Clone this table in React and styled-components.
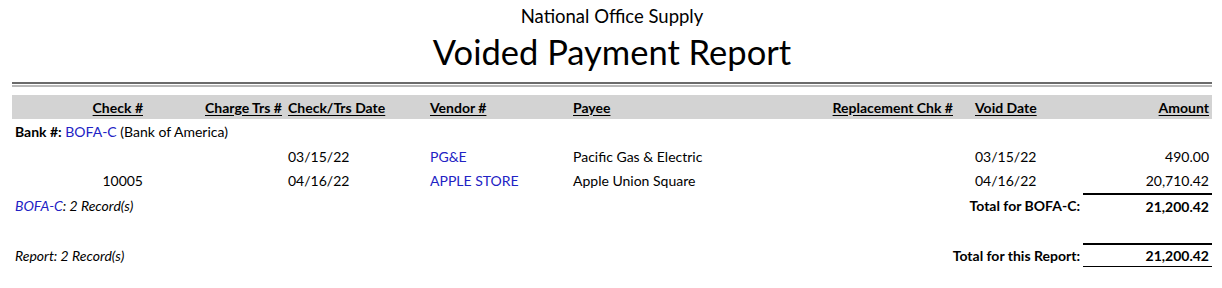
import React from "react";
import styled, { createGlobalStyle } from "styled-components";

const GlobalStyle = createGlobalStyle`
  html, body { margin: 0; padding: 0; background: #fff; }
  body { font-family: Lato, "Open Sans", sans-serif; color: #000; }
`;

const COLS = "134px 139px 142px 143px 230px 156px 127px 129px";

const Page = styled.div`
  width: 1200px;
  padding: 0 10px 0 12px;
`;

const Company = styled.div`
  text-align: center;
  font-size: 18.5px;
  line-height: 22px;
  padding-top: 5px;
`;

const Title = styled.h1`
  margin: 0;
  padding-top: 3px;
  text-align: center;
  font-weight: 400;
  font-size: 34.5px;
  line-height: 44px;
`;

const Rules = styled.div`
  margin-top: 8px;
  display: flex;
  flex-direction: column;
  gap: 1px;
`;

const RuleLine = styled.div`
  height: 2px;
  background: ${(p) => p.$color};
`;

const Row = styled.div`
  display: grid;
  grid-template-columns: ${COLS};
  align-items: center;
  height: ${(p) => p.$h || 24}px;
  font-size: 14px;
`;

const HeadRow = styled(Row)`
  margin-top: 8px;
  background: #d3d3d3;
  font-weight: 700;
`;

const Cell = styled.div`
  padding: 0 3px 0 ${(p) => (p.$indent ? p.$indent : 3)}px;
  text-align: ${(p) => (p.$right ? "right" : "left")};
  grid-column: ${(p) => p.$span || "auto"};
  white-space: nowrap;
  font-weight: ${(p) => (p.$bold ? 700 : "inherit")};
  font-style: ${(p) => (p.$italic ? "italic" : "normal")};
`;

const HeadText = styled.span`
  text-decoration: underline;
  text-underline-offset: 2px;
`;

const Link = styled.span`
  color: #2222c4;
`;

const AmountCell = styled(Cell)`
  align-self: stretch;
  display: flex;
  align-items: center;
  justify-content: flex-end;
  border-top: ${(p) => (p.$top ? "2px solid #000" : "none")};
  border-bottom: ${(p) => (p.$bottom ? "1px solid #000" : "none")};
`;

const Spacer = styled.div`
  height: ${(p) => p.$h}px;
`;

const headers = [
  { t: "Check #", right: true },
  { t: "Charge Trs #", right: true },
  { t: "Check/Trs Date" },
  { t: "Vendor #" },
  { t: "Payee" },
  { t: "Replacement Chk #", right: true },
  { t: "Void Date", indent: 19 },
  { t: "Amount", right: true },
];

const rows = [
  { chk: "", trs: "", date: "03/15/22", vendor: "PG&E", payee: "Pacific Gas & Electric", repl: "", voidDate: "03/15/22", amount: "490.00" },
  { chk: "10005", trs: "", date: "04/16/22", vendor: "APPLE STORE", payee: "Apple Union Square", repl: "", voidDate: "04/16/22", amount: "20,710.42" },
];

export default function App() {
  return (
    <Page>
      <GlobalStyle />
      <Company>National Office Supply</Company>
      <Title>Voided Payment Report</Title>
      <Rules>
        <RuleLine $color="#6b6b6b" />
        <RuleLine $color="#b8b8b8" />
      </Rules>
      <HeadRow>
        {headers.map((h) => (
          <Cell key={h.t} $right={h.right} $indent={h.indent}>
            <HeadText>{h.t}</HeadText>
          </Cell>
        ))}
      </HeadRow>
      <Row $h={25}>
        <Cell $span="1 / -1">
          <b>Bank #:</b> <Link>BOFA-C</Link> (Bank of America)
        </Cell>
      </Row>
      {rows.map((r, i) => (
        <Row key={i} $h={i === 0 ? 24 : 25}>
          <Cell $right>{r.chk}</Cell>
          <Cell $right>{r.trs}</Cell>
          <Cell>{r.date}</Cell>
          <Cell><Link>{r.vendor}</Link></Cell>
          <Cell>{r.payee}</Cell>
          <Cell $right>{r.repl}</Cell>
          <Cell $indent={19}>{r.voidDate}</Cell>
          <AmountCell>{r.amount}</AmountCell>
        </Row>
      ))}
      <Row $h={25}>
        <Cell $span="1 / 6" $italic>
          <Link>BOFA-C</Link>: 2 Record(s)
        </Cell>
        <Cell $span="6 / 8" $right $bold>Total for BOFA-C:</Cell>
        <AmountCell $top $bold>21,200.42</AmountCell>
      </Row>
      <Spacer $h={25} />
      <Row $h={24}>
        <Cell $span="1 / 6" $italic>Report: 2 Record(s)</Cell>
        <Cell $span="6 / 8" $right $bold>Total for this Report:</Cell>
        <AmountCell $top $bottom $bold>21,200.42</AmountCell>
      </Row>
    </Page>
  );
}
